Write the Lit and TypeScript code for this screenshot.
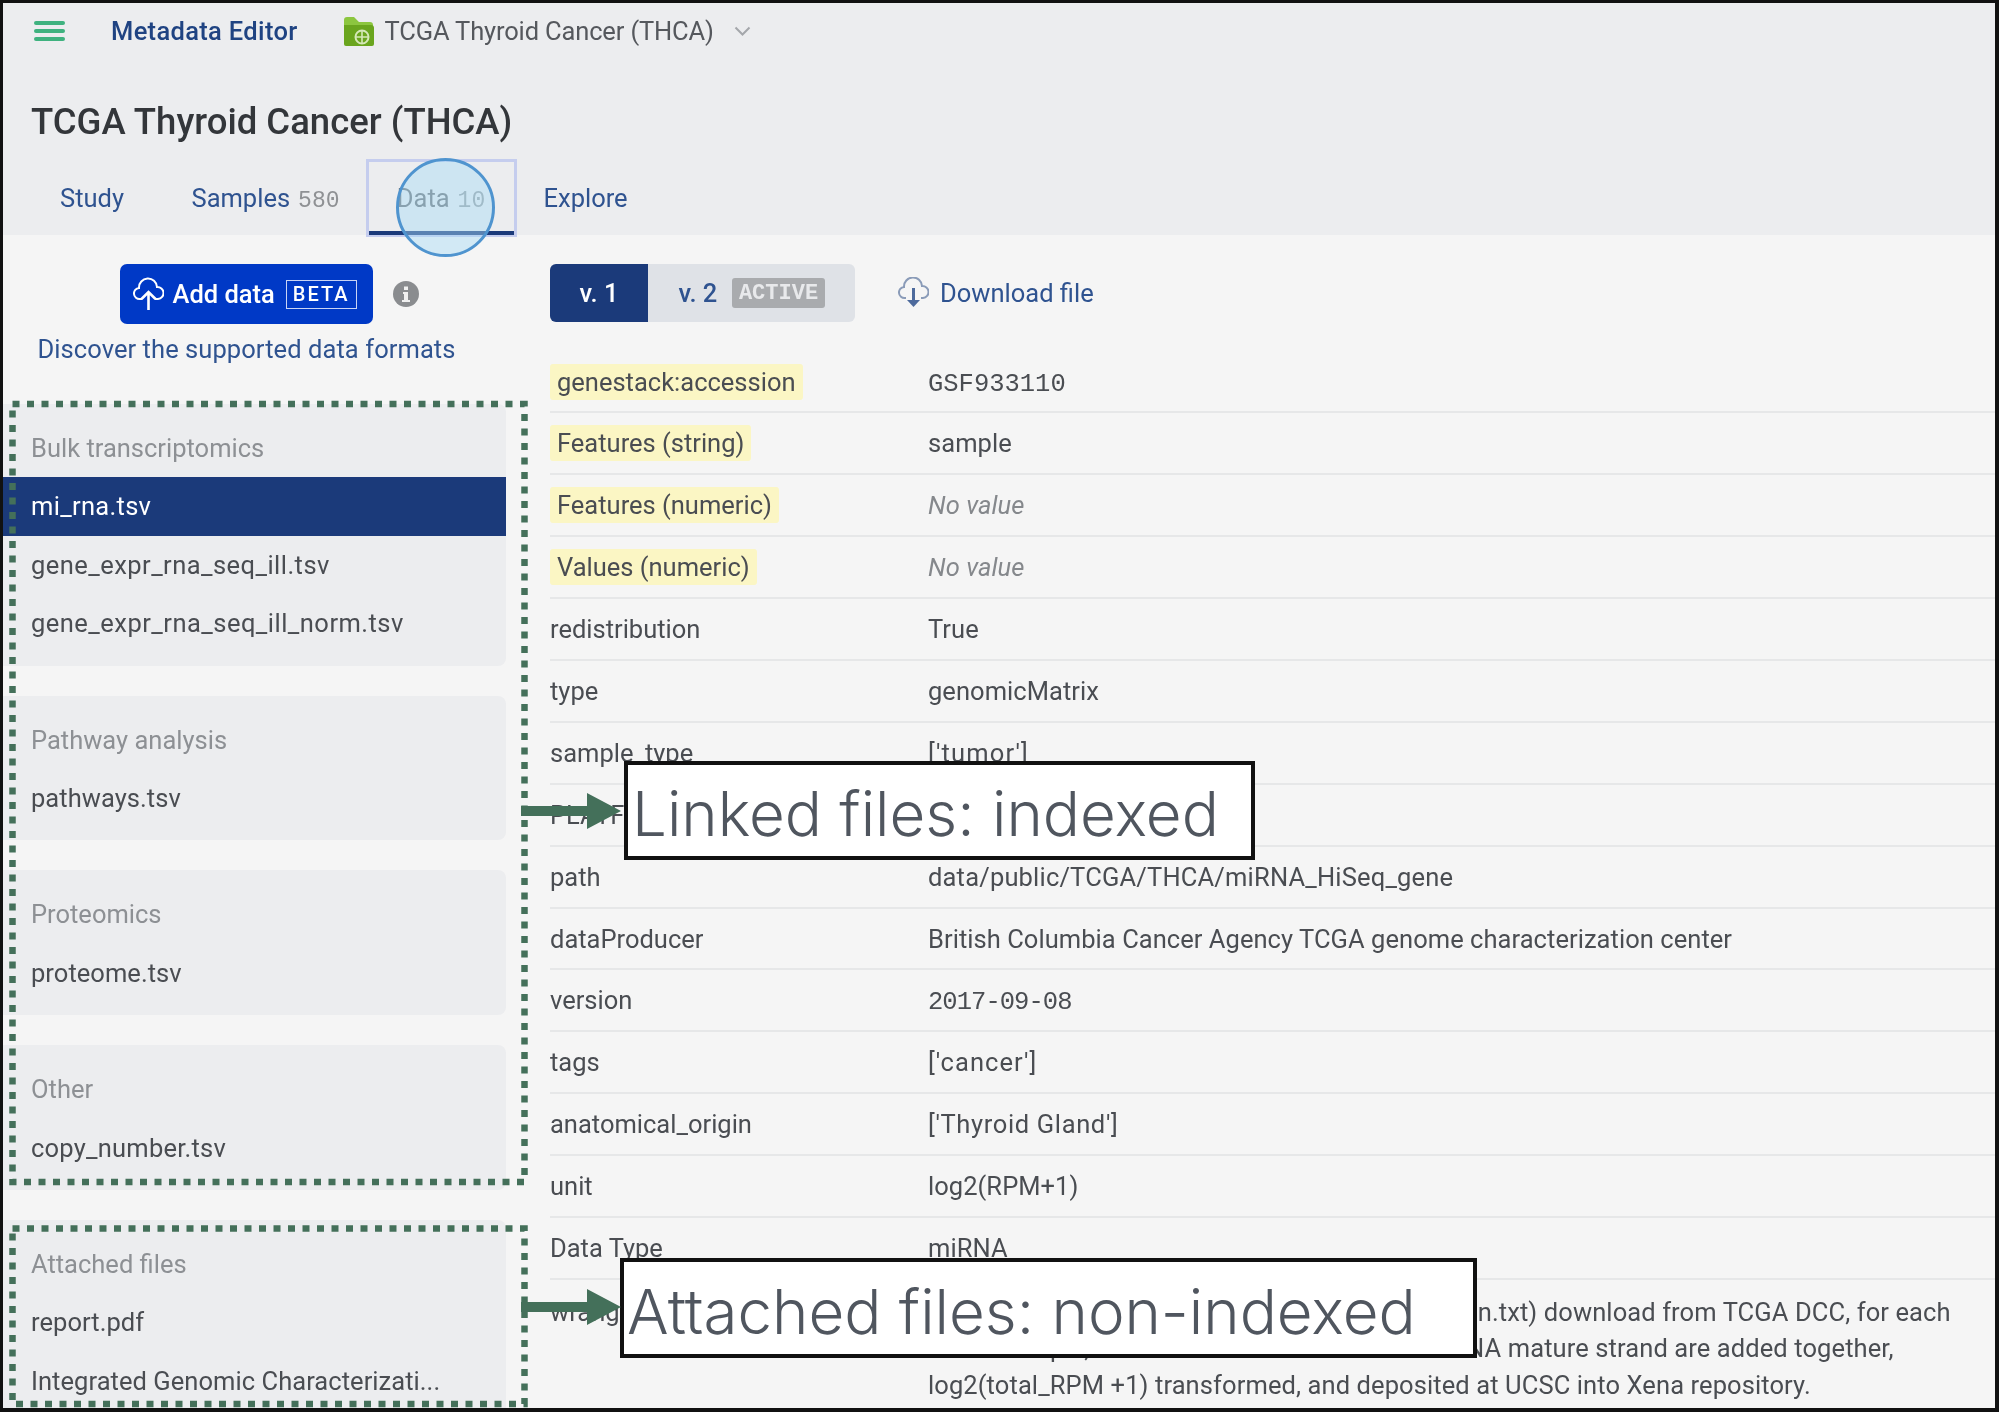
import { LitElement, html, css, svg } from 'lit';
import { customElement } from 'lit/decorators.js';

interface Group {
  title: string;
  files: string[];
}

interface Row {
  key: string;
  value: string;
  mark?: boolean;
  mono?: boolean;
  empty?: boolean;
}

const GROUPS: Group[] = [
  { title: 'Bulk transcriptomics', files: ['mi_rna.tsv', 'gene_expr_rna_seq_ill.tsv', 'gene_expr_rna_seq_ill_norm.tsv'] },
  { title: 'Pathway analysis', files: ['pathways.tsv'] },
  { title: 'Proteomics', files: ['proteome.tsv'] },
  { title: 'Other', files: ['copy_number.tsv'] },
  { title: 'Attached files', files: ['report.pdf', 'Integrated Genomic Characterizati...'] },
];

const ROWS: Row[] = [
  { key: 'genestack:accession', value: 'GSF933110', mark: true, mono: true },
  { key: 'Features (string)', value: 'sample', mark: true },
  { key: 'Features (numeric)', value: 'No value', mark: true, empty: true },
  { key: 'Values (numeric)', value: 'No value', mark: true, empty: true },
  { key: 'redistribution', value: 'True' },
  { key: 'type', value: 'genomicMatrix' },
  { key: 'sample_type', value: "['tumor']" },
  { key: 'PLATFORM', value: 'IlluminaHiSeq_miRNASeq' },
  { key: 'path', value: 'data/public/TCGA/THCA/miRNA_HiSeq_gene' },
  { key: 'dataProducer', value: 'British Columbia Cancer Agency TCGA genome characterization center' },
  { key: 'version', value: '2017-09-08', mono: true },
  { key: 'tags', value: "['cancer']" },
  { key: 'anatomical_origin', value: "['Thyroid Gland']" },
  { key: 'unit', value: 'log2(RPM+1)' },
  { key: 'Data Type', value: 'miRNA' },
];

const DASH_BOXES = [
  { y: 404, h: 778 },
  { y: 1228.5, h: 175.5 },
];

const ARROWS = [811, 1307];

// the reference font has a wider underscore, quotes and brackets than Roboto
function spacing(text: string): string {
  const wide = (text.match(/[_'\[\]]/g) ?? []).length;
  return `letter-spacing:${((wide * 2.5) / text.length + 0.05).toFixed(2)}px`;
}

@customElement('app-root')
export class AppRoot extends LitElement {
  static styles = css`
    :host {
      display: block;
      width: 1999px;
      height: 1412px;
      font-family: 'Roboto', 'Noto Sans', sans-serif;
      font-size: 25.5px;
      color: #4a4d52;
    }
    .frame {
      position: relative;
      box-sizing: border-box;
      width: 1999px;
      height: 1412px;
      overflow: hidden;
      background: #f5f5f5;
      border-style: solid;
      border-color: #111;
      border-width: 3px 4px 4px 3px;
      filter: blur(0.6px);
    }
    .head {
      height: 232px;
      background: #ecedef;
      box-sizing: border-box;
    }
    .topbar {
      display: flex;
      align-items: center;
      height: 56px;
    }
    .burger {
      width: 31px;
      margin-left: 31px;
      display: flex;
      flex-direction: column;
      gap: 4px;
    }
    .burger i {
      display: block;
      height: 4px;
      border-radius: 2px;
      background: #3fb27f;
    }
    .app-name {
      margin-left: 46px;
      color: #1f4382;
      font-weight: 500;
      letter-spacing: 0.33px;
    }
    .folder {
      margin-left: 45px;
    }
    .study {
      margin-left: 11px;
      color: #55585d;
      letter-spacing: -0.15px;
    }
    .chev {
      margin-left: 20px;
    }
    h1 {
      margin: 40px 0 0 28px;
      font-size: 36.5px;
      line-height: 46px;
      font-weight: 500;
      color: #33363a;
    }
    .tabs {
      display: flex;
      margin-top: 14px;
      margin-left: 28px;
      height: 78px;
    }
    .tab {
      display: flex;
      align-items: baseline;
      justify-content: center;
      box-sizing: border-box;
      padding: 0 29px;
      color: #2f5390;
      height: 78px;
      line-height: 78px;
    }
    .tab.samples {
      padding: 0 26px 0 38.5px;
    }
    .tab.explore {
      padding-left: 27px;
    }
    .tab b {
      font: 400 23px/78px 'Liberation Mono', monospace;
      color: #8f9194;
      margin-left: 8px;
    }
    .tab.on {
      width: 151px;
      padding: 0;
      line-height: 72px;
      color: #6d7276;
      border: 3px solid #c5cdee;
      position: relative;
    }
    .tab.on b {
      line-height: 72px;
      color: #9aa0a3;
    }
    .tab.on::after {
      content: '';
      position: absolute;
      left: 0;
      right: 0;
      bottom: -1px;
      height: 4px;
      background: #1b3a7a;
    }
    .body {
      display: grid;
      grid-template-columns: 547px 1fr;
      height: 1173px;
      overflow: hidden;
    }
    .side {
      display: flex;
      flex-direction: column;
    }
    .actions {
      height: 169px;
      display: flex;
      flex-direction: column;
      align-items: center;
    }
    .add-row {
      display: flex;
      align-items: center;
      margin-top: 29px;
      margin-left: -1px;
      width: 313px;
      gap: 20px;
    }
    .add {
      display: flex;
      align-items: center;
      box-sizing: border-box;
      width: 253px;
      height: 60px;
      padding-left: 13px;
      background: #0039c6;
      border-radius: 7px;
      color: #fff;
      font-weight: 500;
    }
    .add span {
      margin-left: 9px;
    }
    .add .beta {
      margin-left: 11px;
      padding: 0 6px;
      border: 1.5px solid #c9d4f5;
      font-size: 20px;
      font-weight: 500;
      line-height: 27px;
      letter-spacing: 2px;
    }
    .info {
      width: 26px;
      height: 26px;
    }
    .discover {
      margin-top: 10px;
      margin-left: -60px;
      color: #2f5390;
      white-space: nowrap;
      letter-spacing: 0.07px;
    }
    .groups {
      display: flex;
      flex-direction: column;
      gap: 30px;
      width: 503px;
    }
    .group {
      background: #ecedef;
      border-radius: 0 8px 8px 0;
      padding: 15px 0 13px;
    }
    .group div {
      height: 58.4px;
      line-height: 58.4px;
      padding-left: 28px;
      white-space: nowrap;
    }
    .group .title {
      color: #8d9094;
    }
    .group .sel {
      background: #1b3a7a;
      color: #fff;
    }
    .versions {
      display: flex;
      align-items: center;
      margin-top: 29px;
      height: 58px;
    }
    .v {
      display: flex;
      align-items: center;
      justify-content: center;
      box-sizing: border-box;
      height: 58px;
      color: #2f5390;
      font-weight: 500;
    }
    .v1 {
      width: 98px;
      background: #1b3a7a;
      color: #fff;
      border-radius: 6px 0 0 6px;
    }
    .v2 {
      width: 207px;
      background: #dfe2e7;
      border-radius: 0 6px 6px 0;
      gap: 15px;
    }
    .active {
      font: 700 22px/28px 'Liberation Mono', monospace;
      background: #a9abae;
      color: #e8e9eb;
      padding: 2px 6.5px 0;
      border-radius: 3px;
    }
    .dl {
      display: flex;
      align-items: center;
      margin-left: 43px;
      gap: 11px;
      color: #2f5390;
    }
    .rows {
      margin-top: 29.5px;
    }
    .row {
      display: grid;
      grid-template-columns: 378px 1fr;
      align-items: baseline;
      height: 61.9px;
      line-height: 61px;
      box-sizing: border-box;
      border-bottom: 2px solid #e6e7e8;
    }
    .row .k {
      white-space: nowrap;
    }
    .row mark {
      background: #fbf6c4;
      color: inherit;
      padding: 3px 7px;
      border-radius: 3px;
    }
    .mono {
      font-family: 'Liberation Mono', monospace;
    }
    .date {
      letter-spacing: -0.95px;
    }
    .empty {
      font-style: italic;
      color: #85888c;
    }
    .wrap {
      height: auto;
      border: 0;
      line-height: 36.5px;
      padding-top: 14px;
    }
    .wrap .v-text {
      white-space: nowrap;
      letter-spacing: 0.1px;
    }
    .overlay {
      position: absolute;
      left: -3px;
      top: -3px;
      pointer-events: none;
    }
    .callout {
      position: absolute;
      box-sizing: border-box;
      background: #fff;
      border: 4px solid #111;
      display: flex;
      align-items: center;
      font-family: 'Inter', sans-serif;
      font-weight: 350;
      font-size: 61.8px;
      color: #50565f;
      white-space: nowrap;
    }
    .c1 {
      left: 621px;
      top: 758px;
      width: 631px;
      height: 99px;
      padding: 6px 0 0 4px;
    }
    .c2 {
      left: 617px;
      top: 1255px;
      width: 857px;
      height: 100px;
      padding: 6px 0 0 3px;
    }
  `;

  private renderOverlay() {
    return html`<svg class="overlay" width="1999" height="1412">
      <circle cx="445.5" cy="207.5" r="48" fill="#a9dcf7" fill-opacity="0.45" stroke="#4f94cf" stroke-width="3"></circle>
      ${DASH_BOXES.map(
        (b) => svg`<rect x="12.5" y=${b.y} width="512" height=${b.h} fill="none" stroke="#44705a"
          stroke-width="6.500" stroke-dasharray="7 7.500"></rect>`
      )}
      ${ARROWS.map(
        (y) => svg`<path d="M521 ${y - 5}h66v-13l34 18-34 18v-13h-66z" fill="#44705a"></path>`
      )}
    </svg>`;
  }

  render() {
    return html`
      <div class="frame">
        <div class="head">
          <div class="topbar">
            <div class="burger"><i></i><i></i><i></i></div>
            <div class="app-name">Metadata Editor</div>
            <svg class="folder" width="31" height="30" viewBox="0 0 31 30">
              <path d="M1 4a3 3 0 0 1 3-3h7l5 5h11a3 3 0 0 1 3 3v3H1z" fill="#8cc63f"></path>
              <path d="M1 9h27a3 3 0 0 1 3 3v16a2 2 0 0 1-2 2H3a2 2 0 0 1-2-2z" fill="#6aa51e"></path>
              <circle cx="19" cy="21" r="6.500" fill="none" stroke="#d5e8b8" stroke-width="2"></circle>
              <path d="M19 14.500v13M13 21h12" stroke="#d5e8b8" stroke-width="1.600"></path>
            </svg>
            <div class="study">TCGA Thyroid Cancer (THCA)</div>
            <svg class="chev" width="17" height="10" viewBox="0 0 17 10">
              <path d="M1.500 1.500l7 7 7-7" fill="none" stroke="#a4a7ab" stroke-width="2"></path>
            </svg>
          </div>
          <h1>TCGA Thyroid Cancer (THCA)</h1>
          <div class="tabs">
            <div class="tab">Study</div>
            <div class="tab samples">Samples<b>580</b></div>
            <div class="tab on">Data<b>10</b></div>
            <div class="tab explore">Explore</div>
          </div>
        </div>
        <div class="body">
          <div class="side">
            <div class="actions">
              <div class="add-row">
                <div class="add">
                  <svg width="31" height="34" viewBox="0 0 31 34" fill="none" stroke="#fff" stroke-width="2">
                    <path d="M9 22H7a5.500 5.500 0 0 1-1-11 9 9 0 0 1 18-1 6 6 0 0 1 1 12h-3"></path>
                    <path d="M15.500 33V15M8.500 22l7-7 7 7" stroke-width="2.600"></path>
                  </svg>
                  <span>Add data</span>
                  <span class="beta">BETA</span>
                </div>
                <svg class="info" viewBox="0 0 26 26">
                  <circle cx="13" cy="13" r="13" fill="#8a8c8f"></circle>
                  <path d="M10 11h5v8h2v2H9v-2h2v-6h-1zM11 5.500h4v3.500h-4z" fill="#f0f0f0"></path>
                </svg>
              </div>
              <div class="discover">Discover the supported data formats</div>
            </div>
            <div class="groups">
              ${GROUPS.map(
                (g) => html`<div class="group">
                  <div class="title">${g.title}</div>
                  ${g.files.map(
                    (f) => html`<div class=${f === 'mi_rna.tsv' ? 'sel' : ''} style=${spacing(f)}>${f}</div>`
                  )}
                </div>`
              )}
            </div>
          </div>
          <div class="main">
            <div class="versions">
              <div class="v v1">v. 1</div>
              <div class="v v2">v. 2 <span class="active">ACTIVE</span></div>
              <div class="dl">
                <svg width="31" height="32" viewBox="0 0 31 32" fill="none" stroke="#8a9bb8" stroke-width="2">
                  <path d="M8 21H7a5.500 5.500 0 0 1-1-11 9 9 0 0 1 18-1 6 6 0 0 1 1 12h-2"></path>
                  <path d="M15.500 11v17" stroke="#4d6a9c" stroke-width="3"></path>
                  <path d="M9 23l6.500 7 6.500-7z" fill="#4d6a9c" stroke="none"></path>
                </svg>
                Download file
              </div>
            </div>
            <div class="rows">
              ${ROWS.map(
                (r) => html`<div class="row">
                  <div class="k">${r.mark ? html`<mark>${r.key}</mark>` : r.key}</div>
                  <div
                    class="${r.mono ? 'mono' : ''} ${r.empty ? 'empty' : ''} ${r.key === 'version' ? 'date' : ''}"
                    style=${r.mono ? '' : spacing(r.value)}
                  >
                    ${r.value}
                  </div>
                </div>`
              )}
              <div class="row wrap">
                <div class="k">wrangling_procedure</div>
                <div class="v-text">
                  Level_3 Data (file names: *.isoform.quantification.txt) download from TCGA DCC, for each<br />
                  TCGA sample, RPM of all the isoforms of a miRNA mature strand are added together,<br />
                  log2(total_RPM +1) transformed, and deposited at UCSC into Xena repository.
                </div>
              </div>
            </div>
          </div>
        </div>
        <div class="callout c1">Linked files: indexed</div>
        <div class="callout c2">Attached files: non-indexed</div>
        ${this.renderOverlay()}
      </div>
    `;
  }
}

declare global {
  interface HTMLElementTagNameMap {
    'app-root': AppRoot;
  }
}
